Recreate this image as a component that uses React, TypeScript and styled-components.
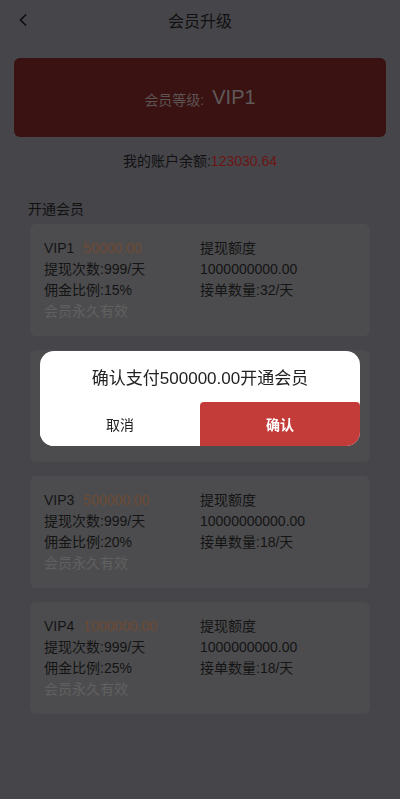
import React from "react";
import styled, { createGlobalStyle } from "styled-components";

interface Level {
  name: string;
  price: string;
  times: string;
  limit: string;
  rate: string;
  orders: string;
}

const levels: Level[] = [
  { name: "VIP1", price: "50000.00", times: "999/天", limit: "1000000000.00", rate: "15%", orders: "32/天" },
  { name: "VIP2", price: "200000.00", times: "999/天", limit: "1000000000.00", rate: "18%", orders: "24/天" },
  { name: "VIP3", price: "500000.00", times: "999/天", limit: "10000000000.00", rate: "20%", orders: "18/天" },
  { name: "VIP4", price: "1000000.00", times: "999/天", limit: "1000000000.00", rate: "25%", orders: "18/天" },
];

function App() {
  return (
    <>
      <GlobalStyle />
      <Page>
        <Header>
          <Back>
            <svg width="10" height="14" viewBox="0 0 10 14">
              <path d="M8 1.5 L2.5 7 L8 12.5" fill="none" stroke="#0c0c0c" strokeWidth="1.6" />
            </svg>
          </Back>
          <Title>会员升级</Title>
        </Header>

        <Banner>
          <BannerLabel>会员等级:</BannerLabel>
          <BannerLevel>VIP1</BannerLevel>
        </Banner>

        <Balance>
          我的账户余额:<BalanceValue>123030.64</BalanceValue>
        </Balance>

        <SectionTitle>开通会员</SectionTitle>

        <CardList>
          {levels.map((lv) => (
            <Card key={lv.name}>
              <Cell>
                {lv.name}
                <Price>{lv.price}</Price>
              </Cell>
              <Cell>提现额度</Cell>
              <Cell>提现次数:{lv.times}</Cell>
              <Cell>{lv.limit}</Cell>
              <Cell>佣金比例:{lv.rate}</Cell>
              <Cell>接单数量:{lv.orders}</Cell>
              <Muted>会员永久有效</Muted>
            </Card>
          ))}
        </CardList>
      </Page>

      <Dialog>
        <DialogText>确认支付500000.00开通会员</DialogText>
        <DialogActions>
          <ActionButton>取消</ActionButton>
          <ActionButton primary>确认</ActionButton>
        </DialogActions>
      </Dialog>
    </>
  );
}

export default App;

const GlobalStyle = createGlobalStyle`
  html, body {
    margin: 0;
    padding: 0;
    background: #46454a;
  }
  body {
    font-family: "Liberation Sans", "Noto Sans CJK SC", sans-serif;
    color: #121212;
  }
  * {
    box-sizing: border-box;
  }
`;

const Page = styled.div`
  display: flex;
  flex-direction: column;
  min-height: 799px;
  background: #46454a;
`;

const Header = styled.header`
  position: relative;
  display: flex;
  align-items: center;
  justify-content: center;
  height: 40px;
`;

const Back = styled.span`
  position: absolute;
  left: 18px;
  top: 13px;
  display: flex;
`;

const Title = styled.h1`
  margin: 0;
  font-size: 16px;
  font-weight: 400;
  color: #111;
`;

const Banner = styled.div`
  display: flex;
  align-items: center;
  justify-content: center;
  margin: 18px 14px 0;
  height: 79px;
  border-radius: 6px;
  background: #3a1212;
`;

const BannerLabel = styled.span`
  font-size: 14px;
  color: #5c5353;
  margin-right: 8px;
  margin-top: 2px;
`;

const BannerLevel = styled.span`
  font-size: 20px;
  color: #5f5a5a;
`;

const Balance = styled.div`
  margin-top: 14px;
  height: 20px;
  text-align: center;
  font-size: 14px;
  line-height: 20px;
  color: #111;
`;

const BalanceValue = styled.span`
  color: #6c1515;
`;

const SectionTitle = styled.div`
  margin: 28px 0 0 28px;
  height: 20px;
  font-size: 14px;
  line-height: 20px;
  color: #111;
`;

const CardList = styled.div`
  display: flex;
  flex-direction: column;
  gap: 14px;
  margin: 5px 30px 0;
`;

const Card = styled.div`
  display: grid;
  grid-template-columns: 1fr 1fr;
  align-content: start;
  height: 112px;
  padding: 14px 14px 0;
  border-radius: 6px;
  background: #4c4c4e;
`;

const Cell = styled.div`
  height: 21px;
  font-size: 14px;
  line-height: 21px;
  color: #141414;
  white-space: nowrap;
`;

const Price = styled.span`
  margin-left: 9px;
  color: #6e4a33;
`;

const Muted = styled(Cell)`
  color: #606060;
`;

const Dialog = styled.div`
  position: fixed;
  left: 40px;
  right: 40px;
  top: 351px;
  display: flex;
  flex-direction: column;
  border-radius: 14px;
  background: #fff;
  overflow: hidden;
`;

const DialogText = styled.div`
  height: 51px;
  display: flex;
  align-items: center;
  justify-content: center;
  font-size: 17px;
  color: #222;
`;

const DialogActions = styled.div`
  display: grid;
  grid-template-columns: 1fr 1fr;
  height: 44px;
`;

const ActionButton = styled.button<{ primary?: boolean }>`
  border: 0;
  padding: 0;
  font-family: inherit;
  font-size: 14px;
  font-weight: ${(p) => (p.primary ? 700 : 400)};
  color: ${(p) => (p.primary ? "#fff" : "#222")};
  background: ${(p) => (p.primary ? "#c43c3a" : "#fff")};
  border-radius: ${(p) => (p.primary ? "4px 4px 0 0" : "0")};
`;
